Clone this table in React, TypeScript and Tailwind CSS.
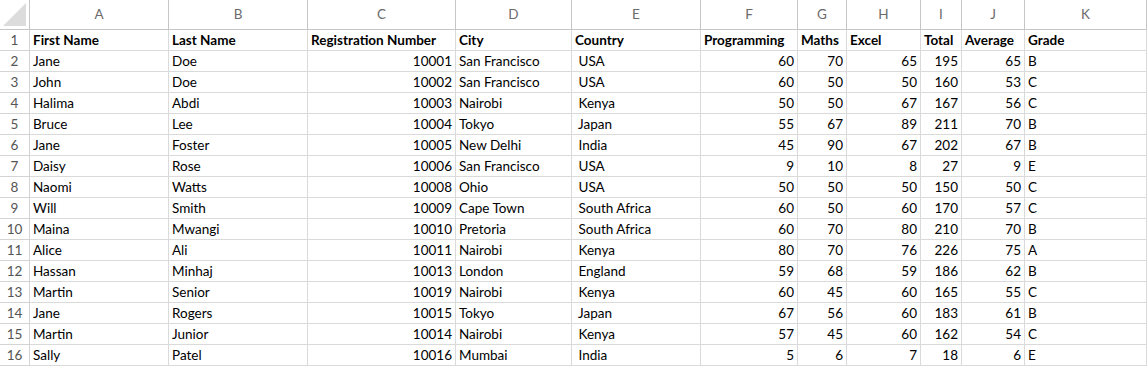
import { Fragment } from "react";

const columns = ["A", "B", "C", "D", "E", "F", "G", "H", "I", "J", "K"];

// right-aligned columns (numbers)
const numeric = [false, false, true, false, false, true, true, true, true, true, false];

const header = [
  "First Name",
  "Last Name",
  "Registration Number",
  "City",
  "Country",
  "Programming",
  "Maths",
  "Excel",
  "Total",
  "Average",
  "Grade",
];

const rows: (string | number)[][] = [
  ["Jane", "Doe", 10001, "San Francisco", " USA", 60, 70, 65, 195, 65, "B"],
  ["John", "Doe", 10002, "San Francisco", " USA", 60, 50, 50, 160, 53, "C"],
  ["Halima", "Abdi", 10003, "Nairobi", " Kenya", 50, 50, 67, 167, 56, "C"],
  ["Bruce", "Lee", 10004, "Tokyo", " Japan", 55, 67, 89, 211, 70, "B"],
  ["Jane", "Foster", 10005, "New Delhi", " India", 45, 90, 67, 202, 67, "B"],
  ["Daisy", "Rose", 10006, "San Francisco", " USA", 9, 10, 8, 27, 9, "E"],
  ["Naomi", "Watts", 10008, "Ohio", " USA", 50, 50, 50, 150, 50, "C"],
  ["Will", "Smith", 10009, "Cape Town", " South Africa", 60, 50, 60, 170, 57, "C"],
  ["Maina", "Mwangi", 10010, "Pretoria", " South Africa", 60, 70, 80, 210, 70, "B"],
  ["Alice", "Ali", 10011, "Nairobi", " Kenya", 80, 70, 76, 226, 75, "A"],
  ["Hassan", "Minhaj", 10013, "London", " England", 59, 68, 59, 186, 62, "B"],
  ["Martin", "Senior", 10019, "Nairobi", " Kenya", 60, 45, 60, 165, 55, "C"],
  ["Jane", "Rogers", 10015, "Tokyo", " Japan", 67, 56, 60, 183, 61, "B"],
  ["Martin", "Junior", 10014, "Nairobi", " Kenya", 57, 45, 60, 162, 54, "C"],
  ["Sally", "Patel", 10016, "Mumbai", " India", 5, 6, 7, 18, 6, "E"],
];

function Corner() {
  return (
    <div className="h-[30px] border-r border-b border-[#c6c6c6] bg-white relative">
      <svg width="29" height="29" className="absolute left-0 top-0">
        <polygon points="3,26 26,26 26,3" fill="#dcdcdc" />
      </svg>
    </div>
  );
}

export default function App() {
  return (
    <div
      className="w-[1147px] h-[366px] overflow-hidden bg-white text-[13.5px] text-black"
      style={{ fontFamily: 'Lato, "Liberation Sans", Arial, sans-serif' }}
    >
      <div className="grid grid-cols-[30px_139px_139px_148px_116px_129px_97px_49px_74px_41px_63px_1fr]">
        {/* column letters */}
        <Corner />
        {columns.map((c) => (
          <div
            key={c}
            className="h-[30px] flex items-center justify-center border-r border-b border-[#c6c6c6] text-[#6b6b6b] text-[13.5px]"
          >
            {c}
          </div>
        ))}

        {/* row 1: headings */}
        <div className="h-[21px] flex items-center justify-center border-r border-b border-[#d4d4d4] text-[#555]">
          1
        </div>
        {header.map((h) => (
          <div
            key={h}
            className="h-[21px] flex items-center px-[3px] border-r border-b border-[#dadada] font-bold whitespace-nowrap overflow-hidden"
          >
            {h}
          </div>
        ))}

        {/* data rows */}
        {rows.map((row, i) => (
          <Fragment key={i}>
            <div className="h-[21px] flex items-center justify-center border-r border-b border-[#d4d4d4] text-[#555]">
              {i + 2}
            </div>
            {row.map((v, j) => (
              <div
                key={j}
                className={`h-[21px] flex items-center px-[3px] border-r border-b border-[#dadada] whitespace-pre overflow-hidden ${
                  numeric[j] ? "justify-end" : "justify-start"
                }`}
              >
                {v}
              </div>
            ))}
          </Fragment>
        ))}
      </div>
    </div>
  );
}
